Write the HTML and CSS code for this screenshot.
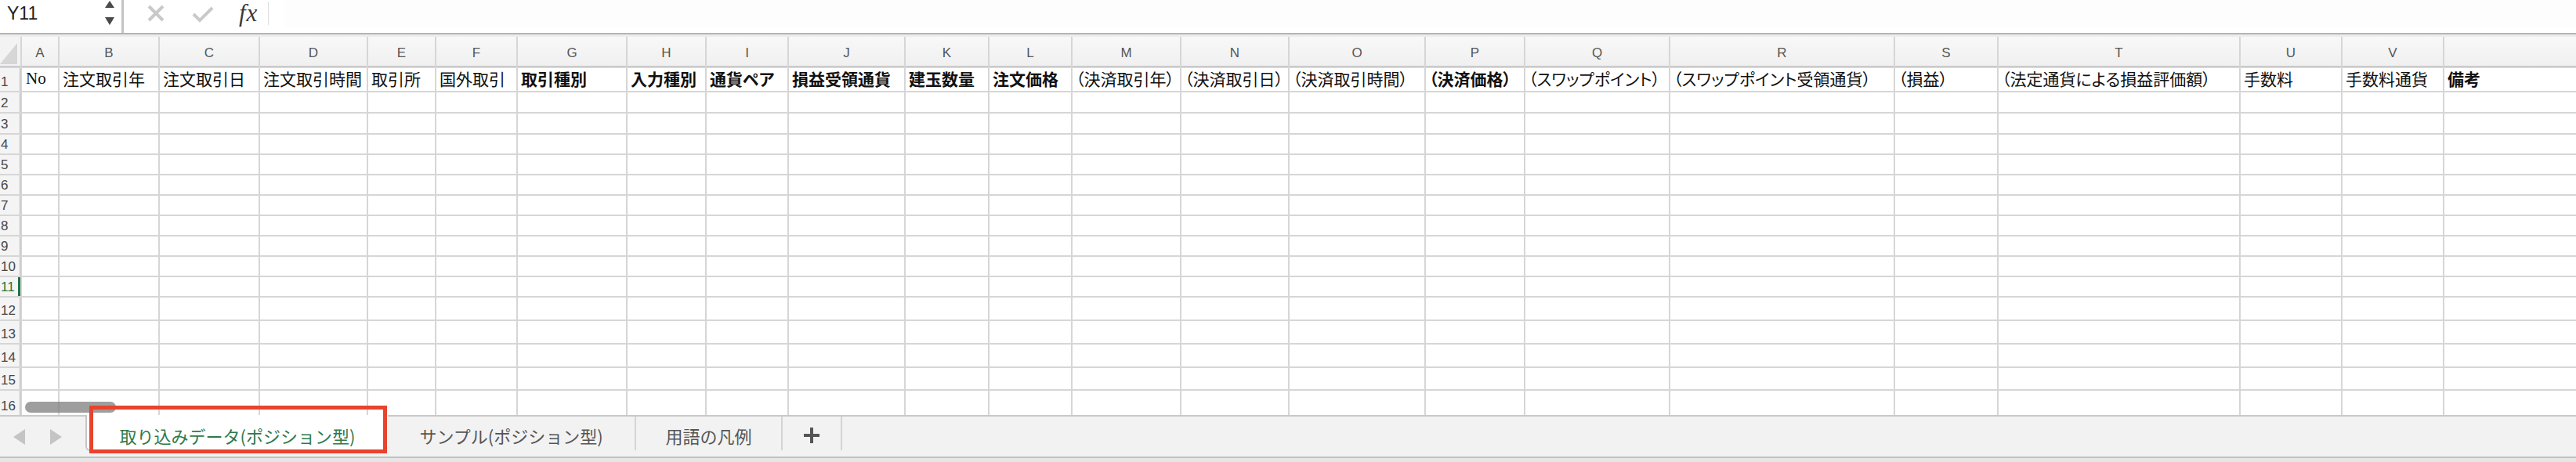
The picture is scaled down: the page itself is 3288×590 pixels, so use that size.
FILE: index.html
```html
<!DOCTYPE html>
<html lang="ja">
<head>
<meta charset="utf-8">
<title>Excel</title>
<link rel="stylesheet" href="styles.css">
</head>
<body>
<div class="app">
  <div class="formula-bar">
    <div class="name-box">
      <span class="name">Y11</span>
      <svg class="spin" width="14" height="34" viewBox="0 0 14 34"><polygon points="7,1 13,10 1,10" fill="#4a4a4a"/><polygon points="1,22 13,22 7,32" fill="#4a4a4a"/></svg>
    </div>
    <div class="fb-tools">
      <svg class="ico-x" width="22" height="22" viewBox="0 0 22 22"><path d="M2 2 L20 20 M20 2 L2 20" stroke="#c9c9c9" stroke-width="4" fill="none"/></svg>
      <svg class="ico-ok" width="28" height="22" viewBox="0 0 28 22"><path d="M2 11 L10 19 L26 3" stroke="#c9c9c9" stroke-width="4" fill="none"/></svg>
      <span class="fx">fx</span>
    </div>
    <div class="fb-input"></div>
  </div>
  <div class="fb-rule"></div>

  <div class="sheet">
    <div class="grid">
      <div class="corner"><svg width="26" height="37" viewBox="0 0 26 37"><polygon points="22,8 22,35 0,35" fill="#d6d6d6"/></svg></div>
      <div class="h">A</div><div class="h">B</div><div class="h">C</div><div class="h">D</div><div class="h">E</div><div class="h">F</div><div class="h">G</div><div class="h">H</div><div class="h">I</div><div class="h">J</div><div class="h">K</div><div class="h">L</div><div class="h">M</div><div class="h">N</div><div class="h">O</div><div class="h">P</div><div class="h">Q</div><div class="h">R</div><div class="h">S</div><div class="h">T</div><div class="h">U</div><div class="h">V</div><div class="h"></div>

      <div class="r">1</div>
      <div class="t serif">No</div>
      <div class="t">注文取引年</div>
      <div class="t">注文取引日</div>
      <div class="t">注文取引時間</div>
      <div class="t">取引所</div>
      <div class="t">国外取引</div>
      <div class="t b">取引種別</div>
      <div class="t b">入力種別</div>
      <div class="t b">通貨ペア</div>
      <div class="t b">損益受領通貨</div>
      <div class="t b">建玉数量</div>
      <div class="t b">注文価格</div>
      <div class="t">（決済取引年）</div>
      <div class="t">（決済取引日）</div>
      <div class="t">（決済取引時間）</div>
      <div class="t b">（決済価格）</div>
      <div class="t">（スワップポイント）</div>
      <div class="t">（スワップポイント受領通貨）</div>
      <div class="t">（損益）</div>
      <div class="t">（法定通貨による損益評価額）</div>
      <div class="t">手数料</div>
      <div class="t">手数料通貨</div>
      <div class="t b">備考</div>

      <div class="r">2</div><div class="c"></div><div class="c"></div><div class="c"></div><div class="c"></div><div class="c"></div><div class="c"></div><div class="c"></div><div class="c"></div><div class="c"></div><div class="c"></div><div class="c"></div><div class="c"></div><div class="c"></div><div class="c"></div><div class="c"></div><div class="c"></div><div class="c"></div><div class="c"></div><div class="c"></div><div class="c"></div><div class="c"></div><div class="c"></div><div class="c"></div>
      <div class="r">3</div><div class="c"></div><div class="c"></div><div class="c"></div><div class="c"></div><div class="c"></div><div class="c"></div><div class="c"></div><div class="c"></div><div class="c"></div><div class="c"></div><div class="c"></div><div class="c"></div><div class="c"></div><div class="c"></div><div class="c"></div><div class="c"></div><div class="c"></div><div class="c"></div><div class="c"></div><div class="c"></div><div class="c"></div><div class="c"></div><div class="c"></div>
      <div class="r">4</div><div class="c"></div><div class="c"></div><div class="c"></div><div class="c"></div><div class="c"></div><div class="c"></div><div class="c"></div><div class="c"></div><div class="c"></div><div class="c"></div><div class="c"></div><div class="c"></div><div class="c"></div><div class="c"></div><div class="c"></div><div class="c"></div><div class="c"></div><div class="c"></div><div class="c"></div><div class="c"></div><div class="c"></div><div class="c"></div><div class="c"></div>
      <div class="r">5</div><div class="c"></div><div class="c"></div><div class="c"></div><div class="c"></div><div class="c"></div><div class="c"></div><div class="c"></div><div class="c"></div><div class="c"></div><div class="c"></div><div class="c"></div><div class="c"></div><div class="c"></div><div class="c"></div><div class="c"></div><div class="c"></div><div class="c"></div><div class="c"></div><div class="c"></div><div class="c"></div><div class="c"></div><div class="c"></div><div class="c"></div>
      <div class="r">6</div><div class="c"></div><div class="c"></div><div class="c"></div><div class="c"></div><div class="c"></div><div class="c"></div><div class="c"></div><div class="c"></div><div class="c"></div><div class="c"></div><div class="c"></div><div class="c"></div><div class="c"></div><div class="c"></div><div class="c"></div><div class="c"></div><div class="c"></div><div class="c"></div><div class="c"></div><div class="c"></div><div class="c"></div><div class="c"></div><div class="c"></div>
      <div class="r">7</div><div class="c"></div><div class="c"></div><div class="c"></div><div class="c"></div><div class="c"></div><div class="c"></div><div class="c"></div><div class="c"></div><div class="c"></div><div class="c"></div><div class="c"></div><div class="c"></div><div class="c"></div><div class="c"></div><div class="c"></div><div class="c"></div><div class="c"></div><div class="c"></div><div class="c"></div><div class="c"></div><div class="c"></div><div class="c"></div><div class="c"></div>
      <div class="r">8</div><div class="c"></div><div class="c"></div><div class="c"></div><div class="c"></div><div class="c"></div><div class="c"></div><div class="c"></div><div class="c"></div><div class="c"></div><div class="c"></div><div class="c"></div><div class="c"></div><div class="c"></div><div class="c"></div><div class="c"></div><div class="c"></div><div class="c"></div><div class="c"></div><div class="c"></div><div class="c"></div><div class="c"></div><div class="c"></div><div class="c"></div>
      <div class="r">9</div><div class="c"></div><div class="c"></div><div class="c"></div><div class="c"></div><div class="c"></div><div class="c"></div><div class="c"></div><div class="c"></div><div class="c"></div><div class="c"></div><div class="c"></div><div class="c"></div><div class="c"></div><div class="c"></div><div class="c"></div><div class="c"></div><div class="c"></div><div class="c"></div><div class="c"></div><div class="c"></div><div class="c"></div><div class="c"></div><div class="c"></div>
      <div class="r">10</div><div class="c"></div><div class="c"></div><div class="c"></div><div class="c"></div><div class="c"></div><div class="c"></div><div class="c"></div><div class="c"></div><div class="c"></div><div class="c"></div><div class="c"></div><div class="c"></div><div class="c"></div><div class="c"></div><div class="c"></div><div class="c"></div><div class="c"></div><div class="c"></div><div class="c"></div><div class="c"></div><div class="c"></div><div class="c"></div><div class="c"></div>
      <div class="r sel">11</div><div class="c"></div><div class="c"></div><div class="c"></div><div class="c"></div><div class="c"></div><div class="c"></div><div class="c"></div><div class="c"></div><div class="c"></div><div class="c"></div><div class="c"></div><div class="c"></div><div class="c"></div><div class="c"></div><div class="c"></div><div class="c"></div><div class="c"></div><div class="c"></div><div class="c"></div><div class="c"></div><div class="c"></div><div class="c"></div><div class="c"></div>
      <div class="r">12</div><div class="c"></div><div class="c"></div><div class="c"></div><div class="c"></div><div class="c"></div><div class="c"></div><div class="c"></div><div class="c"></div><div class="c"></div><div class="c"></div><div class="c"></div><div class="c"></div><div class="c"></div><div class="c"></div><div class="c"></div><div class="c"></div><div class="c"></div><div class="c"></div><div class="c"></div><div class="c"></div><div class="c"></div><div class="c"></div><div class="c"></div>
      <div class="r">13</div><div class="c"></div><div class="c"></div><div class="c"></div><div class="c"></div><div class="c"></div><div class="c"></div><div class="c"></div><div class="c"></div><div class="c"></div><div class="c"></div><div class="c"></div><div class="c"></div><div class="c"></div><div class="c"></div><div class="c"></div><div class="c"></div><div class="c"></div><div class="c"></div><div class="c"></div><div class="c"></div><div class="c"></div><div class="c"></div><div class="c"></div>
      <div class="r">14</div><div class="c"></div><div class="c"></div><div class="c"></div><div class="c"></div><div class="c"></div><div class="c"></div><div class="c"></div><div class="c"></div><div class="c"></div><div class="c"></div><div class="c"></div><div class="c"></div><div class="c"></div><div class="c"></div><div class="c"></div><div class="c"></div><div class="c"></div><div class="c"></div><div class="c"></div><div class="c"></div><div class="c"></div><div class="c"></div><div class="c"></div>
      <div class="r">15</div><div class="c"></div><div class="c"></div><div class="c"></div><div class="c"></div><div class="c"></div><div class="c"></div><div class="c"></div><div class="c"></div><div class="c"></div><div class="c"></div><div class="c"></div><div class="c"></div><div class="c"></div><div class="c"></div><div class="c"></div><div class="c"></div><div class="c"></div><div class="c"></div><div class="c"></div><div class="c"></div><div class="c"></div><div class="c"></div><div class="c"></div>
      <div class="r">16</div><div class="c"></div><div class="c"></div><div class="c"></div><div class="c"></div><div class="c"></div><div class="c"></div><div class="c"></div><div class="c"></div><div class="c"></div><div class="c"></div><div class="c"></div><div class="c"></div><div class="c"></div><div class="c"></div><div class="c"></div><div class="c"></div><div class="c"></div><div class="c"></div><div class="c"></div><div class="c"></div><div class="c"></div><div class="c"></div><div class="c"></div>
    </div>
    <div class="hthumb"></div>
  </div>

  <div class="tabbar">
    <div class="tabs">
      <div class="nav">
        <svg width="16" height="22" viewBox="0 0 16 22"><polygon points="15,1 15,21 0,11" fill="#c4c4c4"/></svg>
        <svg width="16" height="22" viewBox="0 0 16 22"><polygon points="1,1 1,21 16,11" fill="#c4c4c4"/></svg>
      </div>
      <div class="tab active">取り込みデータ(ポジション型)</div>
      <div class="tab t2">サンプル(ポジション型)</div>
      <div class="tab t3">用語の凡例</div>
      <div class="tab add"><svg width="24" height="22" viewBox="0 0 24 22"><path d="M12 1 V21 M2 11 H22" stroke="#555" stroke-width="4" fill="none"/></svg></div>
    </div>
    <div class="tabbar-foot"></div>
  </div>

  <div class="annot"></div>
</div>
</body>
</html>
```

FILE: styles.css
```css
html, body {
  margin: 0;
  padding: 0;
  background: #ffffff;
}

body {
  width: 3288px;
  height: 590px;
  overflow: hidden;
  font-family: "Liberation Sans", Arial, sans-serif;
}

.app {
  position: relative;
  width: 3288px;
  height: 590px;
  overflow: hidden;
}

/* ---------- formula bar ---------- */
.formula-bar {
  height: 42px;
  display: flex;
  align-items: stretch;
  background: #ffffff;
}

.name-box {
  width: 158px;
  display: flex;
  align-items: flex-start;
  justify-content: space-between;
  padding-left: 9px;
  padding-right: 8px;
  box-sizing: border-box;
  border-right: 3px solid #c4c4c4;
}

.name {
  font-size: 23px;
  line-height: 34px;
  color: #1e1e1e;
}

.fb-tools {
  width: 190px;
  display: flex;
  align-items: flex-start;
  box-sizing: border-box;
  padding-left: 30px;
  padding-top: 6px;
}

.ico-x {
  margin-right: 35px;
}

.ico-ok {
  margin-top: 1px;
  margin-right: 32px;
}

.fx {
  font-family: "Liberation Serif", "Times New Roman", serif;
  font-style: italic;
  font-size: 31px;
  line-height: 30px;
  color: #3a3a3a;
  letter-spacing: 1px;
  padding-right: 13px;
  margin-top: -4px;
  border-right: 1px solid #dedede;
}

.fb-input {
  flex: 1;
  height: 35px;
  margin-left: 15px;
  background: #fdfdfd;
}

.fb-rule {
  height: 3px;
  border-top: 2px solid #b4b4b4;
  background: #ececec;
}

/* ---------- sheet grid ---------- */
.sheet {
  position: relative;
  height: 483px;
  overflow: hidden;
}

.grid {
  display: grid;
  width: max-content;
  grid-template-columns: 26px 46px 126px 126px 136px 85px 102px 138px 99px 103px 147px 105px 104px 137px 136px 172px 125px 183px 285px 130px 307px 128px 128px 300px;
  grid-template-rows: 38px 29px 25px 25px 24px 24px 24px 24px 24px 24px 24px 24px 28px 28px 28px 27px 31px;
  column-gap: 2px;
  row-gap: 2px;
  background: #d6d6d6;
}

.corner {
  background: #f3f3f3;
  border-bottom: 1px solid #c2c2c2;
  box-sizing: border-box;
}

.corner svg {
  display: block;
}

.h {
  background: linear-gradient(#f8f8f8, #f0f0f0);
  color: #565656;
  font-size: 17px;
  line-height: 20px;
  display: flex;
  align-items: center;
  justify-content: center;
  padding-top: 5px;
  box-sizing: border-box;
  border-bottom: 1px solid #c2c2c2;
}

.r {
  background: #f4f4f4;
  color: #474747;
  font-size: 17px;
  line-height: 1;
  display: flex;
  align-items: flex-end;
  padding-left: 1px;
  padding-bottom: 3px;
  box-sizing: border-box;
  box-shadow: inset -1px 0 0 #bdbdbd;
}

.r.sel {
  color: #21773f;
  box-shadow: inset -3px 0 0 #217346;
}

.c {
  background: #ffffff;
}

.t {
  background: #ffffff;
  color: #111111;
  font-family: "Noto Sans CJK JP", "Noto Sans", sans-serif;
  font-feature-settings: "palt";
  font-size: 21px;
  line-height: 23px;
  white-space: nowrap;
  display: flex;
  align-items: flex-end;
  padding-left: 4px;
  padding-bottom: 4px;
  box-sizing: border-box;
}

.t.b {
  font-weight: 700;
}

.t.serif {
  font-family: "Liberation Serif", "Times New Roman", serif;
  font-size: 21px;
  padding-left: 5px;
}

.hthumb {
  position: absolute;
  left: 32px;
  top: 466px;
  width: 116px;
  height: 14px;
  border-radius: 7px;
  background: rgba(125, 125, 125, 0.75);
}

/* ---------- sheet tabs ---------- */
.tabbar {
  height: 60px;
  box-sizing: border-box;
  border-top: 2px solid #c9c9c9;
  background: #f2f2f2;
}

.tabs {
  height: 51px;
  display: flex;
  align-items: flex-start;
}

.nav {
  width: 109px;
  height: 51px;
  display: flex;
  align-items: center;
  padding-left: 17px;
  gap: 30px;
  box-sizing: border-box;
}

.tab {
  height: 43px;
  display: flex;
  align-items: center;
  justify-content: center;
  font-family: "Noto Sans CJK JP", "Noto Sans", sans-serif;
  font-size: 22px;
  color: #555555;
  box-sizing: border-box;
  white-space: nowrap;
  padding-top: 4px;
}

.tab.active {
  width: 386px;
  height: 46px;
  margin-top: -2px;
  background: #ffffff;
  color: #2d7a4c;
  border-left: 2px solid #c6c6c6;
  border-bottom: 2px solid #c6c6c6;
  border-bottom-left-radius: 6px;
  border-bottom-right-radius: 6px;
  padding-top: 8px;
}

.tab.t2 {
  width: 317px;
  border-right: 2px solid #d4d4d4;
}

.tab.t3 {
  width: 187px;
  border-right: 2px solid #d4d4d4;
}

.tab.add {
  width: 76px;
  border-right: 2px solid #d4d4d4;
}

.tabbar-foot {
  height: 7px;
  border-top: 2px solid #c0c0c0;
  background: #e6e6e6;
  box-sizing: border-box;
}

/* annotation box drawn over the active tab */
.annot {
  position: absolute;
  left: 114px;
  top: 518px;
  width: 380px;
  height: 61px;
  border: 5px solid #e8432e;
  box-sizing: border-box;
  pointer-events: none;
}
```
